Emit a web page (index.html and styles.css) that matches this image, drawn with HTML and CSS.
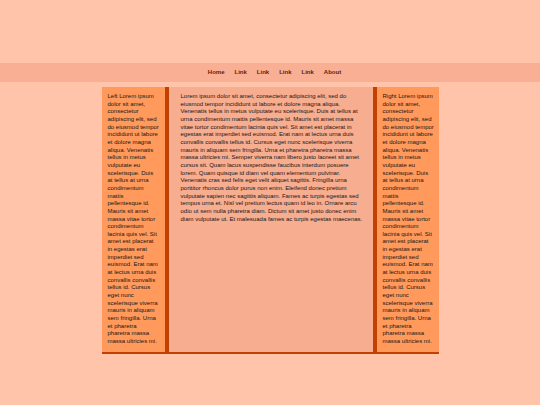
FILE: index.html
```html
<!DOCTYPE html>
<html>
<head>
<meta charset="utf-8">
<link rel="stylesheet" href="styles.css">
</head>
<body>
<header class="top"></header>
<nav class="nav">
  <ul class="nav-list">
    <li><a href="#">Home</a></li>
    <li><a href="#">Link</a></li>
    <li><a href="#">Link</a></li>
    <li><a href="#">Link</a></li>
    <li><a href="#">Link</a></li>
    <li><a href="#">About</a></li>
  </ul>
</nav>
<main class="wrap">
  <aside class="side side-left">Left Lorem ipsum dolor sit amet, consectetur adipiscing elit, sed do eiusmod tempor incididunt ut labore et dolore magna aliqua. Venenatis tellus in metus vulputate eu scelerisque. Duis at tellus at urna condimentum mattis pellentesque id. Mauris sit amet massa vitae tortor condimentum lacinia quis vel. Sit amet est placerat in egestas erat imperdiet sed euismod. Erat nam at lectus urna duis convallis convallis tellus id. Cursus eget nunc scelerisque viverra mauris in aliquam sem fringilla. Urna et pharetra pharetra massa massa ultricies mi.</aside>
  <section class="main">
    <p class="main-text">Lorem ipsum dolor sit amet, consectetur adipiscing elit, sed do eiusmod tempor incididunt ut labore et dolore magna aliqua. Venenatis tellus in metus vulputate eu scelerisque. Duis at tellus at urna condimentum mattis pellentesque id. Mauris sit amet massa vitae tortor condimentum lacinia quis vel. Sit amet est placerat in egestas erat imperdiet sed euismod. Erat nam at lectus urna duis convallis convallis tellus id. Cursus eget nunc scelerisque viverra mauris in aliquam sem fringilla. Urna et pharetra pharetra massa massa ultricies mi. Semper viverra nam libero justo laoreet sit amet cursus sit. Quam lacus suspendisse faucibus interdum posuere lorem. Quam quisque id diam vel quam elementum pulvinar. Venenatis cras sed felis eget velit aliquet sagittis. Fringilla urna porttitor rhoncus dolor purus non enim. Eleifend donec pretium vulputate sapien nec sagittis aliquam. Fames ac turpis egestas sed tempus urna et. Nisl vel pretium lectus quam id leo in. Ornare arcu odio ut sem nulla pharetra diam. Dictum sit amet justo donec enim diam vulputate ut. Et malesuada fames ac turpis egestas maecenas.</p>
  </section>
  <aside class="side side-right">Right Lorem ipsum dolor sit amet, consectetur adipiscing elit, sed do eiusmod tempor incididunt ut labore et dolore magna aliqua. Venenatis tellus in metus vulputate eu scelerisque. Duis at tellus at urna condimentum mattis pellentesque id. Mauris sit amet massa vitae tortor condimentum lacinia quis vel. Sit amet est placerat in egestas erat imperdiet sed euismod. Erat nam at lectus urna duis convallis convallis tellus id. Cursus eget nunc scelerisque viverra mauris in aliquam sem fringilla. Urna et pharetra pharetra massa massa ultricies mi.</aside>
</main>
</body>
</html>
```

FILE: styles.css
```css
html, body {
  margin: 0;
  padding: 0;
}
body {
  background: #ffc4aa;
  font-family: "Liberation Sans", Arial, sans-serif;
  color: #1e1410;
  width: 540px;
  height: 405px;
  overflow: hidden;
}
.top {
  height: 63px;
}
.nav {
  background: #f8af94;
  height: 19px;
  display: flex;
  align-items: center;
  justify-content: center;
}
.nav-list {
  list-style: none;
  margin: 0;
  padding: 0 0 0 9px;
  display: flex;
}
.nav-list a {
  display: block;
  padding: 0 5px;
  font-size: 6px;
  font-weight: bold;
  color: #5e2410;
  text-decoration: none;
  line-height: 19px;
}
.wrap {
  width: 337px;
  margin: 5px auto 0;
  display: flex;
  border-bottom: 2px solid #c24100;
  font-size: 6px;
  line-height: 7.66px;
}
.side {
  background: #ff9a5c;
  padding: 6px 5.5px 6px 6px;
  width: 51.5px;
  flex: none;
}
.side-left {
  border-right: 4px solid #c24100;
}
.side-right {
  border-left: 4px solid #c24100;
  padding-right: 4.5px;
}
.main {
  background: #f7ad90;
  flex: 1;
  padding: 6px 10px 6px 12px;
}
.main-text {
  margin: 0;
  width: 182px;
}
```
